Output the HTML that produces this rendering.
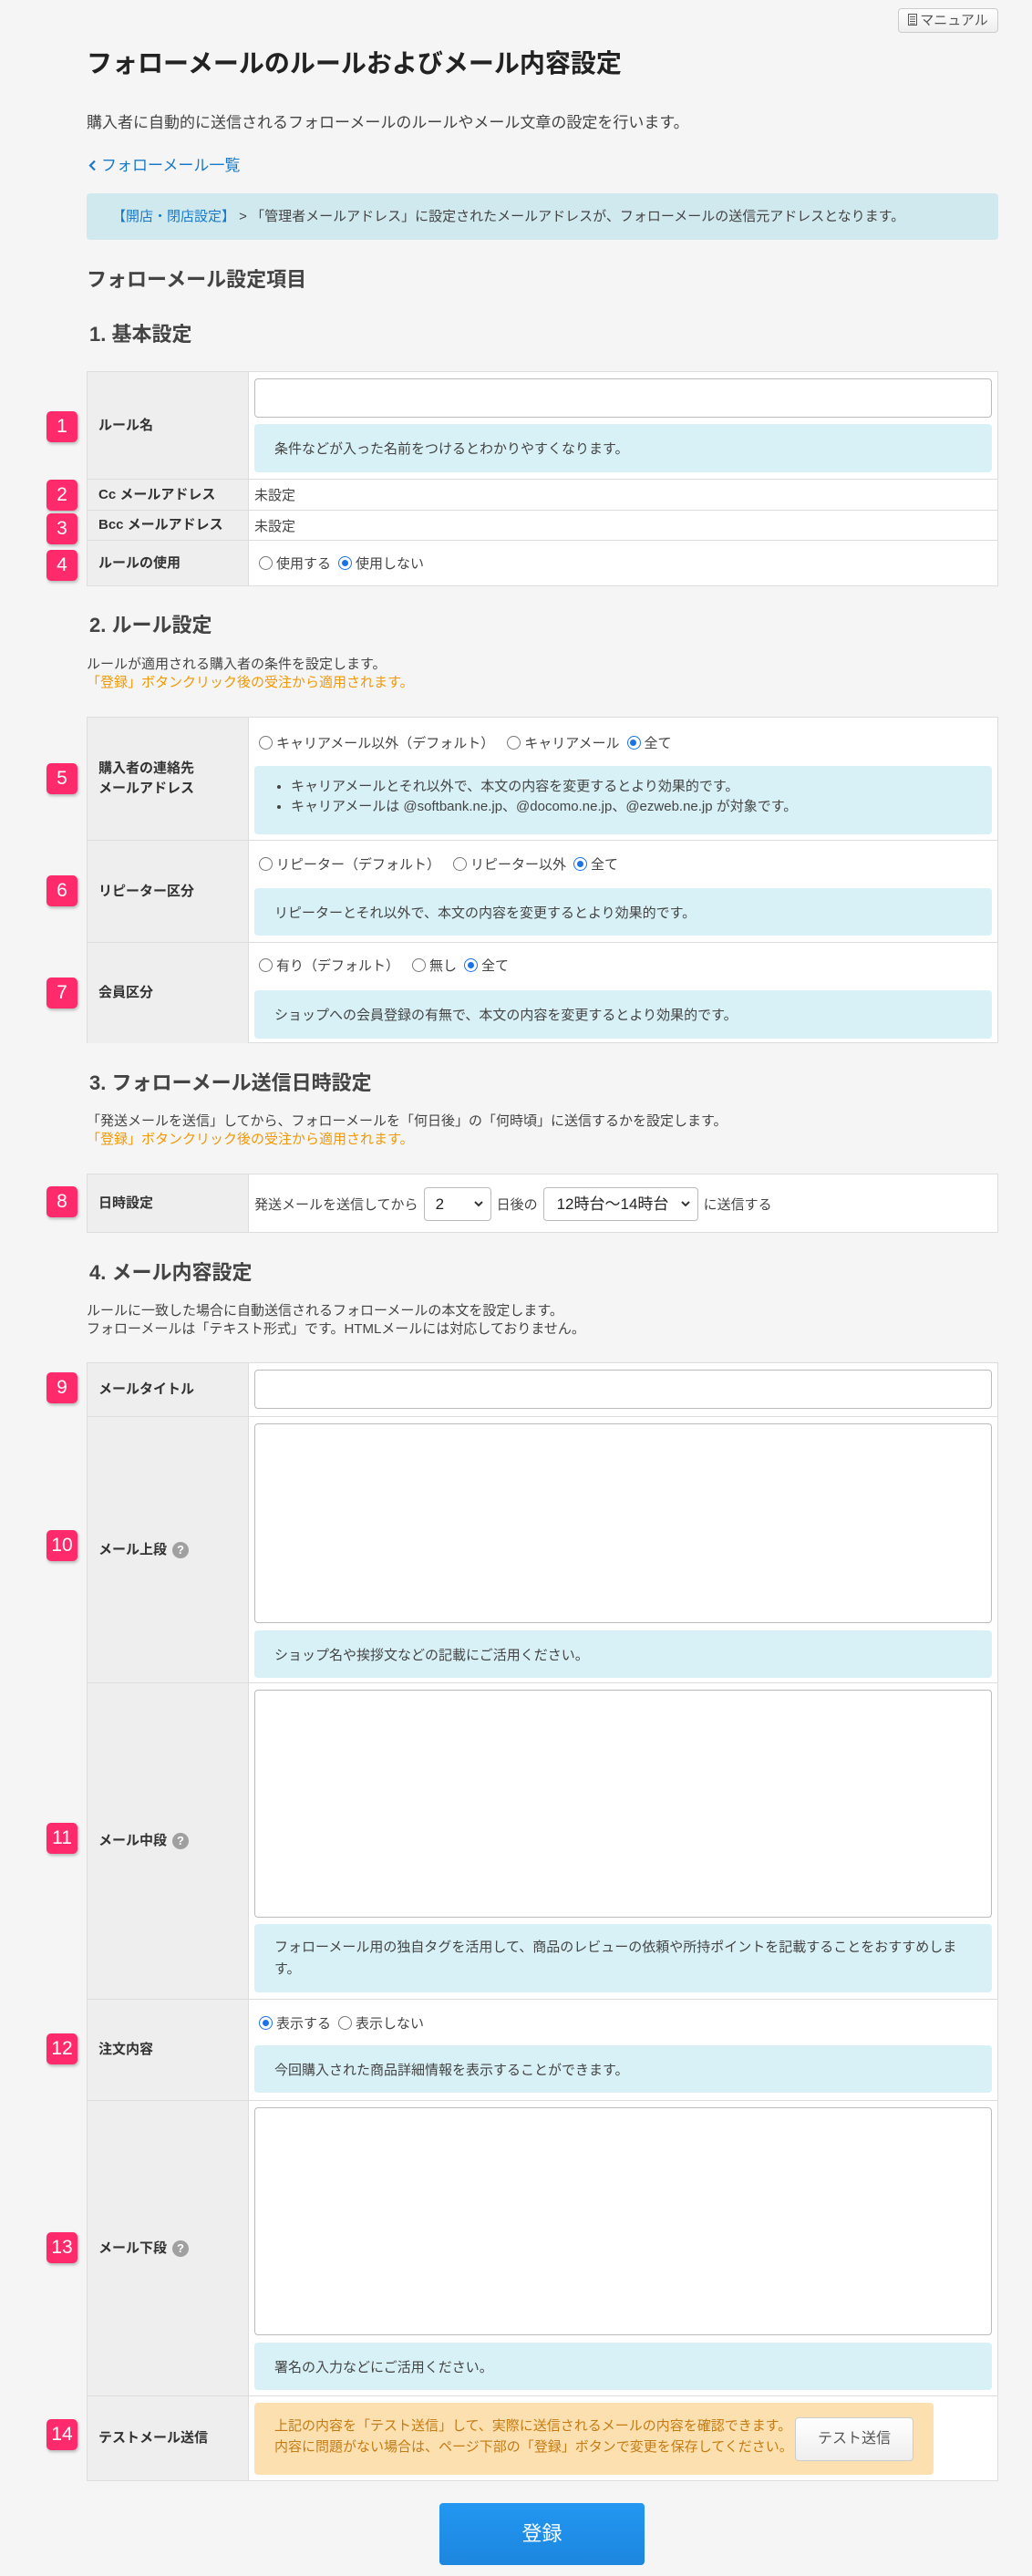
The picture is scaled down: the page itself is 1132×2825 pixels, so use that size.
<!DOCTYPE html>
<html><head><meta charset="utf-8">
<style>
*{box-sizing:border-box;margin:0;padding:0}
body{width:1132px;height:2825px;background:#f5f5f5;font-family:"Liberation Sans","Noto Sans CJK JP",sans-serif;color:#333;position:relative;overflow:hidden;font-size:15px}
.a{position:absolute}
.h2{font-size:22px;font-weight:bold;color:#444}
.txt{font-size:15px;color:#444;line-height:20px}
.or{color:#f39800}
.tbl{position:absolute;left:95px;width:1000px;background:#fff;border:1px solid #ddd}
.row{position:absolute;left:0;width:998px;border-top:1px solid #ddd}
.row.first{border-top:none}
.lab{position:absolute;left:0;top:0;bottom:0;width:177px;background:#eee;border-right:1px solid #ddd;display:flex;align-items:center;padding-left:12px;font-weight:bold;font-size:15px;color:#333;line-height:22px}
.badge{position:absolute;left:-45px;width:34px;height:34px;background:#fe2a6c;color:#fff;border-radius:5px;font-size:21px;display:flex;align-items:center;justify-content:center;box-shadow:1px 2px 3px rgba(0,0,0,.25)}
.inp{position:absolute;left:183px;width:809px;background:#fff;border:1px solid #bbb;border-radius:4px}
.hint{position:absolute;left:183px;width:809px;background:#d8f1f6;border-radius:4px;padding-left:22px;display:flex;align-items:center;font-size:15px;color:#444}
.val{position:absolute;left:183px;font-size:15px;color:#444}
.rad{position:absolute;left:188px;font-size:15px;color:#444;display:flex;align-items:center;white-space:nowrap}
.r{display:inline-block;width:15px;height:15px;border:1.5px solid #777;border-radius:50%;margin-right:4px;background:#fff;position:relative}
.r.on{border:1.5px solid #1a73e8}
.r.on:after{content:"";position:absolute;left:2.5px;top:2.5px;width:7px;height:7px;border-radius:50%;background:#1a73e8}
.sp{display:inline-block;width:14px}
.q{display:inline-block;width:18px;height:18px;border-radius:50%;background:#a0a0a0;color:#fff;font-size:13px;text-align:center;line-height:18px;margin-left:6px;font-weight:bold;vertical-align:2px}
.chev{position:absolute;right:8px;top:14px}
</style></head><body>

<div class="a" style="left:985px;top:9px;width:110px;height:27px;border:1px solid #ccc;border-radius:4px;background:linear-gradient(#fff,#eee);font-size:15px;color:#555;text-align:center;line-height:25px"><svg width="10" height="13" viewBox="0 0 10 13" style="vertical-align:-1px;margin-right:3px"><rect x="0.5" y="0.5" width="9" height="12" fill="#fff" stroke="#555"/><path d="M2 3.5h6M2 6h6M2 8.5h6M2 11h6" stroke="#555"/></svg>マニュアル</div>

<div class="a" style="left:95px;top:48px;font-size:28px;font-weight:bold;color:#222">フォローメールのルールおよびメール内容設定</div>
<div class="a" style="left:95px;top:120px;font-size:17px;color:#444">購入者に自動的に送信されるフォローメールのルールやメール文章の設定を行います。</div>
<div class="a" style="left:97px;top:167px;font-size:17px;color:#1a7ac8"><svg width="9" height="13" viewBox="0 0 9 13" style="vertical-align:-1px;margin-right:5px"><path d="M7 1.5L2 6.5l5 5" fill="none" stroke="#1a7ac8" stroke-width="2.2"/></svg>フォローメール一覧</div>

<div class="a" style="left:95px;top:212px;width:1000px;height:51px;background:#cfe9ef;border-radius:4px;padding-left:28px;line-height:51px;font-size:15px;color:#444"><span style="color:#1a7ac8">【開店・閉店設定】</span>&nbsp;&gt;&nbsp;「管理者メールアドレス」に設定されたメールアドレスが、フォローメールの送信元アドレスとなります。</div>

<div class="a h2" style="left:95px;top:289px">フォローメール設定項目</div>
<div class="a h2" style="left:98px;top:349px">1. 基本設定</div>

<div class="tbl" style="top:407px;height:236px">
 <div class="row first" style="top:0;height:117px"><div class="lab">ルール名</div><div class="badge" style="top:43px">1</div>
  <div class="inp" style="top:7px;height:43px"></div>
  <div class="hint" style="top:57px;height:53px">条件などが入った名前をつけるとわかりやすくなります。</div></div>
 <div class="row" style="top:117px;height:34px"><div class="lab">Cc メールアドレス</div><div class="badge" style="top:0px">2</div><div class="val" style="top:6px">未設定</div></div>
 <div class="row" style="top:151px;height:33px"><div class="lab">Bcc メールアドレス</div><div class="badge" style="top:3px">3</div><div class="val" style="top:6px">未設定</div></div>
 <div class="row" style="top:184px;height:50px"><div class="lab">ルールの使用</div><div class="badge" style="top:10px">4</div>
  <div class="rad" style="top:14px"><span class="r"></span>使用する<span class="sp" style="width:8px"></span><span class="r on"></span>使用しない</div></div>
</div>

<div class="a h2" style="left:98px;top:668px">2. ルール設定</div>
<div class="a txt" style="left:95px;top:719px">ルールが適用される購入者の条件を設定します。<br><span class="or">「登録」ボタンクリック後の受注から適用されます。</span></div>

<div class="tbl" style="top:786px;height:358px">
 <div class="row first" style="top:0;height:134px"><div class="lab">購入者の連絡先<br>メールアドレス</div><div class="badge" style="top:50px">5</div>
  <div class="rad" style="top:17px"><span class="r"></span>キャリアメール以外（デフォルト）<span class="sp"></span><span class="r"></span>キャリアメール<span class="sp" style="width:8px"></span><span class="r on"></span>全て</div>
  <div class="hint" style="top:53px;height:75px;display:block;padding-top:12px;padding-left:40px;line-height:22px"><ul style="list-style:disc"><li>キャリアメールとそれ以外で、本文の内容を変更するとより効果的です。</li><li>キャリアメールは @softbank.ne.jp、@docomo.ne.jp、@ezweb.ne.jp が対象です。</li></ul></div></div>
 <div class="row" style="top:134px;height:112px"><div class="lab">リピーター区分</div><div class="badge" style="top:38px">6</div>
  <div class="rad" style="top:15px"><span class="r"></span>リピーター（デフォルト）<span class="sp"></span><span class="r"></span>リピーター以外<span class="sp" style="width:8px"></span><span class="r on"></span>全て</div>
  <div class="hint" style="top:52px;height:52px">リピーターとそれ以外で、本文の内容を変更するとより効果的です。</div></div>
 <div class="row" style="top:246px;height:111px"><div class="lab">会員区分</div><div class="badge" style="top:38px">7</div>
  <div class="rad" style="top:14px"><span class="r"></span>有り（デフォルト）<span class="sp"></span><span class="r"></span>無し<span class="sp" style="width:8px"></span><span class="r on"></span>全て</div>
  <div class="hint" style="top:52px;height:53px">ショップへの会員登録の有無で、本文の内容を変更するとより効果的です。</div></div>
</div>

<div class="a h2" style="left:98px;top:1170px">3. フォローメール送信日時設定</div>
<div class="a txt" style="left:95px;top:1220px">「発送メールを送信」してから、フォローメールを「何日後」の「何時頃」に送信するかを設定します。<br><span class="or">「登録」ボタンクリック後の受注から適用されます。</span></div>

<div class="tbl" style="top:1287px;height:65px">
 <div class="row first" style="top:0;height:63px"><div class="lab">日時設定</div><div class="badge" style="top:13px">8</div>
  <div class="a" style="left:183px;top:13px;height:38px;display:flex;align-items:center;font-size:15px;color:#444;white-space:nowrap">発送メールを送信してから
   <span style="display:inline-block;width:74px;height:37px;border:1px solid #bbb;border-radius:4px;margin:0 6px;position:relative;font-size:17px;color:#222;line-height:35px;padding-left:12px">2<svg class="chev" width="10" height="7" viewBox="0 0 10 7"><path d="M1 1l4 4 4-4" fill="none" stroke="#333" stroke-width="2"/></svg></span>日後の
   <span style="display:inline-block;width:170px;height:37px;border:1px solid #bbb;border-radius:4px;margin:0 6px;position:relative;font-size:17px;color:#222;line-height:35px;padding-left:14px">12時台〜14時台<svg class="chev" width="10" height="7" viewBox="0 0 10 7"><path d="M1 1l4 4 4-4" fill="none" stroke="#333" stroke-width="2"/></svg></span>に送信する</div></div>
</div>

<div class="a h2" style="left:98px;top:1378px">4. メール内容設定</div>
<div class="a txt" style="left:95px;top:1428px">ルールに一致した場合に自動送信されるフォローメールの本文を設定します。<br>フォローメールは「テキスト形式」です。HTMLメールには対応しておりません。</div>

<div class="tbl" style="top:1494px;height:1227px">
 <div class="row first" style="top:0;height:58px"><div class="lab">メールタイトル</div><div class="badge" style="top:10px">9</div>
  <div class="inp" style="top:7px;height:43px"></div></div>
 <div class="row" style="top:58px;height:292px"><div class="lab">メール上段<span class="q">?</span></div><div class="badge" style="top:124px">10</div>
  <div class="inp" style="top:7px;height:219px"></div>
  <div class="hint" style="top:234px;height:52px">ショップ名や挨拶文などの記載にご活用ください。</div></div>
 <div class="row" style="top:350px;height:347px"><div class="lab">メール中段<span class="q">?</span></div><div class="badge" style="top:153px">11</div>
  <div class="inp" style="top:7px;height:250px"></div>
  <div class="hint" style="top:264px;height:75px;line-height:24px;padding-right:20px">フォローメール用の独自タグを活用して、商品のレビューの依頼や所持ポイントを記載することをおすすめします。</div></div>
 <div class="row" style="top:697px;height:111px"><div class="lab">注文内容</div><div class="badge" style="top:37px">12</div>
  <div class="rad" style="top:15px"><span class="r on"></span>表示する<span class="sp" style="width:8px"></span><span class="r"></span>表示しない</div>
  <div class="hint" style="top:50px;height:52px">今回購入された商品詳細情報を表示することができます。</div></div>
 <div class="row" style="top:808px;height:324px"><div class="lab">メール下段<span class="q">?</span></div><div class="badge" style="top:144px">13</div>
  <div class="inp" style="top:7px;height:250px"></div>
  <div class="hint" style="top:265px;height:52px">署名の入力などにご活用ください。</div></div>
 <div class="row" style="top:1132px;height:93px"><div class="lab">テストメール送信</div><div class="badge" style="top:25px">14</div>
  <div class="a" style="left:183px;top:7px;width:745px;height:79px;background:#fde0b0;border-radius:4px;padding:14px 0 0 22px;font-size:15px;line-height:23px;color:#c47b14">上記の内容を「テスト送信」して、実際に送信されるメールの内容を確認できます。<br>内容に問題がない場合は、ページ下部の「登録」ボタンで変更を保存してください。</div>
  <div class="a" style="left:776px;top:23px;width:130px;height:48px;border:1px solid #ccc;border-radius:4px;background:linear-gradient(#fff,#eee);text-align:center;line-height:46px;font-size:16px;color:#555">テスト送信</div></div>
</div>

<div class="a" style="left:482px;top:2745px;width:225px;height:68px;border-radius:4px;background:linear-gradient(#2297f2,#1d86de);color:#fff;font-size:22px;text-align:center;line-height:68px">登録</div>
</body></html>
